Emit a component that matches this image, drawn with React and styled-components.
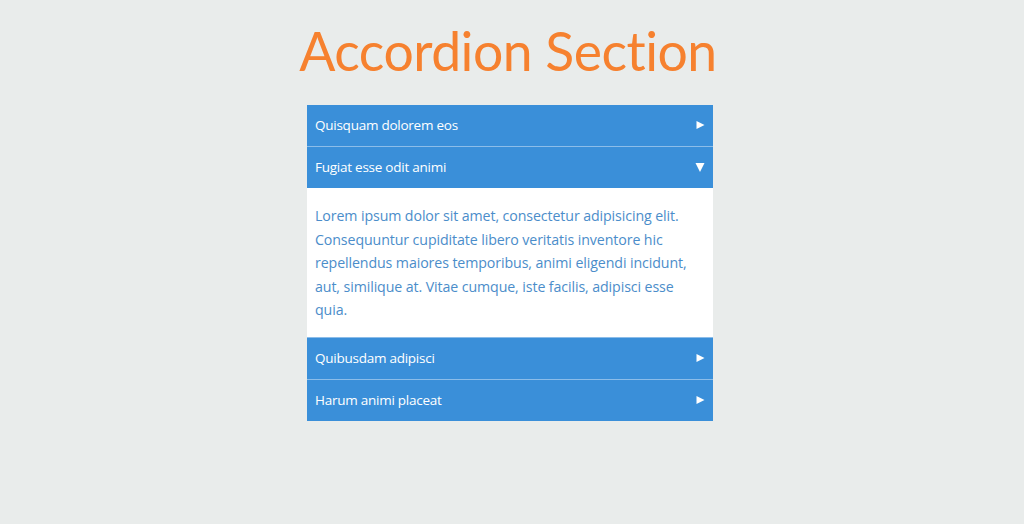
import { useState } from 'react'
import styled, { createGlobalStyle } from 'styled-components'

const GlobalStyle = createGlobalStyle`
  html, body {
    margin: 0;
    padding: 0;
    background: #e9eceb;
  }
`

const Page = styled.div`
  min-height: 524px;
  display: flex;
  flex-direction: column;
  align-items: center;
  padding-right: 4px;
`

const Title = styled.h1`
  margin: 17px 4px 22px 0;
  font-family: Lato, "Open Sans", sans-serif;
  font-weight: 400;
  font-size: 53.5px;
  line-height: 66px;
  color: #f6812f;
  letter-spacing: -0.5px;
`

const Accordion = styled.div`
  width: 406px;
  display: flex;
  flex-direction: column;
`

// first header has no divider line above it
const Header = styled.button`
  display: flex;
  align-items: center;
  justify-content: space-between;
  width: 406px;
  height: ${p => (p.$first ? '41px' : '42px')};
  padding: 0 8px 1px;
  border: none;
  border-top: ${p => (p.$first ? 'none' : '1px solid #8cbde9')};
  background: #3a8fd9;
  color: #fff;
  font-family: "Open Sans", Lato, sans-serif;
  font-size: 13.5px;
  text-align: left;
  cursor: pointer;
  box-sizing: border-box;
`

const HeaderLabel = styled.span`
  letter-spacing: -0.25px;
`

const Arrow = styled.svg`
  width: 10px;
  height: 10px;
`

const Panel = styled.div`
  background: #fff;
  padding: 16px 18px 15px 8px;
  color: #4b8dca;
  font-family: "Open Sans", Lato, sans-serif;
  font-size: 14.2px;
  line-height: 23.5px;
  letter-spacing: -0.1px;
`

const items = [
  { title: 'Quisquam dolorem eos', body: '' },
  {
    title: 'Fugiat esse odit animi',
    body:
      'Lorem ipsum dolor sit amet, consectetur adipisicing elit. Consequuntur cupiditate libero veritatis inventore hic repellendus maiores temporibus, animi eligendi incidunt, aut, similique at. Vitae cumque, iste facilis, adipisci esse quia.',
  },
  { title: 'Quibusdam adipisci', body: '' },
  { title: 'Harum animi placeat', body: '' },
]

function Caret({ open }) {
  return (
    <Arrow viewBox="0 0 10 10">
      {open ? (
        <polygon points="0.5,1 9.5,1 5,10" fill="#fff" />
      ) : (
        <polygon points="1.5,1 9.5,5 1.5,9" fill="#fff" />
      )}
    </Arrow>
  )
}

export default function App() {
  const [open, setOpen] = useState(1)

  return (
    <>
      <GlobalStyle />
      <Page>
        <Title>Accordion Section</Title>
        <Accordion>
          {items.map((item, i) => (
            <div key={item.title}>
              <Header $first={i === 0} onClick={() => setOpen(open === i ? -1 : i)}>
                <HeaderLabel>{item.title}</HeaderLabel>
                <Caret open={open === i} />
              </Header>
              {open === i && item.body && <Panel>{item.body}</Panel>}
            </div>
          ))}
        </Accordion>
      </Page>
    </>
  )
}
